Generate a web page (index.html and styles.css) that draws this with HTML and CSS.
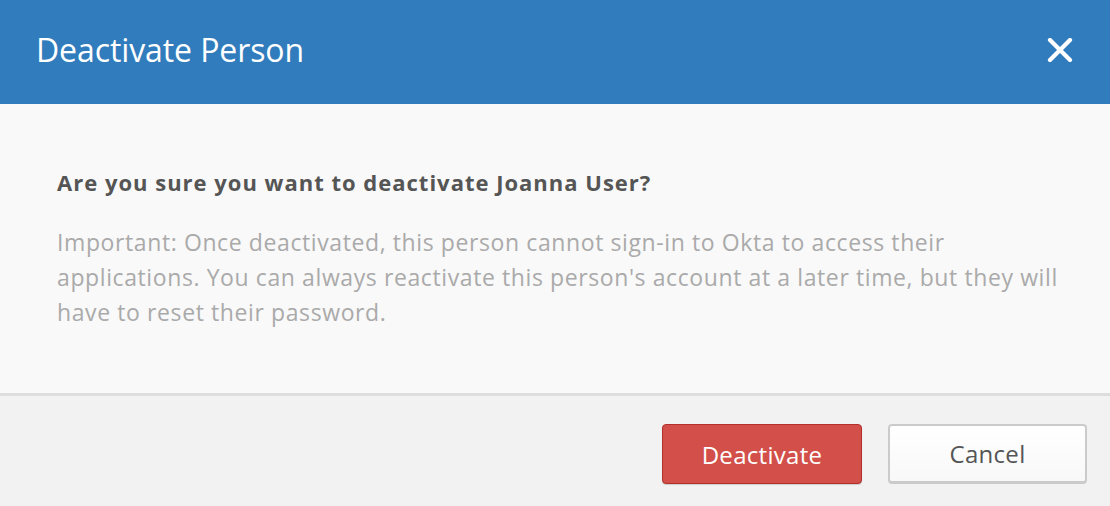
FILE: index.html
```html
<!DOCTYPE html>
<html lang="en">
<head>
<meta charset="utf-8">
<title>Deactivate Person</title>
<link rel="stylesheet" href="styles.css">
</head>
<body>
<div class="modal">
  <header class="modal-header">
    <h1 class="modal-title">Deactivate Person</h1>
    <button class="close" aria-label="Close">
      <svg width="26" height="24" viewBox="0 0 26 24" aria-hidden="true">
        <path d="M3 2 L23 22 M23 2 L3 22" stroke="#fff" stroke-width="4.2" stroke-linecap="round" fill="none"/>
      </svg>
    </button>
  </header>
  <section class="modal-body">
    <p class="question">Are you sure you want to deactivate Joanna User?</p>
    <p class="note">Important: Once deactivated, this person cannot sign-in to Okta to access their applications. You can always reactivate this person's account at a later time, but they will have to reset their password.</p>
  </section>
  <footer class="modal-footer">
    <button class="btn btn-danger">Deactivate</button>
    <button class="btn btn-default">Cancel</button>
  </footer>
</div>
</body>
</html>
```

FILE: styles.css
```css
html, body {
  margin: 0;
  padding: 0;
  background: #f2f2f2;
}
body {
  font-family: "Open Sans", "Liberation Sans", sans-serif;
}
.modal {
  display: flex;
  flex-direction: column;
  min-height: 506px;
}
.modal-header {
  height: 104px;
  background: #317cbc;
  display: flex;
  align-items: center;
  justify-content: space-between;
  padding: 0 37px 0 36px;
  box-sizing: border-box;
}
.modal-title {
  margin: 0 0 6px 0;
  font-weight: 400;
  font-size: 32px;
  color: #fff;
  letter-spacing: -0.1px;
}
.close {
  background: none;
  border: 0;
  padding: 0;
  width: 26px;
  height: 24px;
  display: flex;
  margin-top: -4px;
}
.modal-body {
  background: #f9f9f9;
  padding: 64px 34px 63px 57px;
  border-bottom: 3px solid #dedede;
}
.question {
  margin: 0 0 29px 0;
  font-size: 22px;
  line-height: 28px;
  font-weight: 700;
  color: #555;
  letter-spacing: 1px;
}
.note {
  margin: 0;
  font-size: 23px;
  line-height: 35px;
  color: #aaa;
  letter-spacing: 0.6px;
}
.modal-footer {
  flex: 1;
  background: #f2f2f2;
  display: flex;
  justify-content: flex-end;
  align-items: flex-start;
  gap: 26px;
  padding: 28px 23px 0 0;
}
.btn {
  font-family: inherit;
  font-size: 24px;
  height: 60px;
  border-radius: 4px;
  box-sizing: border-box;
  cursor: pointer;
  letter-spacing: 0.3px;
}
.btn-danger {
  width: 200px;
  background: #d24f4a;
  color: #fff;
  border: 1px solid #b2302b;
  box-shadow: 0 1px 1px rgba(0,0,0,0.15);
}
.btn-default {
  width: 199px;
  background: linear-gradient(#ffffff, #f8f8f8);
  color: #555;
  border: 2px solid #cbcbcb;
  border-bottom-width: 3px;
}
```
